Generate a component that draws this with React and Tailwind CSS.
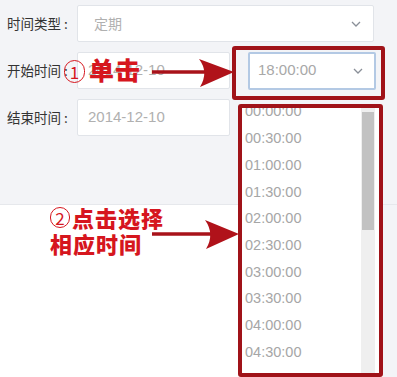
import React from 'react'

const times = ['00:00:00', '00:30:00', '01:00:00', '01:30:00', '02:00:00', '02:30:00', '03:00:00', '03:30:00', '04:00:00', '04:30:00', '05:00:00']

function Chevron() {
  return (
    <svg viewBox="0 0 10 6" className="h-[6px] w-[10px]" aria-hidden="true">
      <path d="M1 1l4 4 4-4" fill="none" stroke="#8a8f98" strokeWidth="1.3" />
    </svg>
  )
}

function Circled({ n, className }) {
  return (
    <span className={`absolute flex items-center justify-center rounded-full border border-[#d6161e] text-[17px] leading-none text-[#d6161e] ${className}`}>
      {n}
    </span>
  )
}

function Label({ children }) {
  return (
    <span className="flex w-[70px] shrink-0 items-center text-[13.5px] text-[#333]">
      {children}
      <span className="ml-[3px]">:</span>
    </span>
  )
}

export default function App() {
  const input = 'flex h-full items-center rounded-[2px] border border-[#e1e4e9] bg-white text-[#b0b0b0]'

  return (
    <div className="relative h-[377px] w-[397px] overflow-hidden bg-white font-['Noto_Sans_CJK_SC','Liberation_Sans',sans-serif]">
      <div className="flex h-[205px] flex-col gap-[10px] border-b border-[#e6e8ec] bg-[#f3f4f7] pl-[7px] pt-[5px]">
        <div className="flex h-[37px] items-center">
          <Label>时间类型</Label>
          <div className={`${input} w-[297px] justify-between pl-[16px] pr-[12px] text-[14px]`}>
            <span>定期</span>
            <Chevron />
          </div>
        </div>
        <div className="flex h-[37px] items-center">
          <Label>开始时间</Label>
          <div className={`${input} w-[153px] pl-[10px] font-['Liberation_Sans',sans-serif] text-[15px]`}>2014-12-10</div>
          <div className="ml-[18px] flex h-[38px] w-[128px] items-center justify-between rounded-[2px] border-2 border-[#b3c9e4] bg-white pl-[8px] pr-[11px] font-['Liberation_Sans',sans-serif] text-[15px] text-[#a8a8a8]">
            <span>18:00:00</span>
            <Chevron />
          </div>
        </div>
        <div className="flex h-[37px] items-center">
          <Label>结束时间</Label>
          <div className={`${input} w-[153px] pl-[10px] font-['Liberation_Sans',sans-serif] text-[15px]`}>2014-12-10</div>
        </div>
      </div>
      <div className="flex h-[172px]">
        <div className="flex-1 bg-white" />
        <div className="w-[14px] bg-[#f3f4f7]" />
      </div>

      {/* open time list */}
      <div className="absolute left-[238px] top-[104px] flex h-[273px] w-[145px] rounded-[3px] border-4 border-[#a01319] bg-white">
        <div className="flex-1 overflow-hidden">
          <div className="-mt-[9px] pl-[3px]">
            {times.map((t) => (
              <div key={t} className="flex h-[26.7px] items-center font-['Liberation_Sans',sans-serif] text-[14.5px] text-[#a6a6a6]">{t}</div>
            ))}
          </div>
        </div>
        <div className="mr-[4px] w-[14px] bg-[#efefef] pt-[4px]">
          <div className="mx-auto h-[118px] w-[12px] bg-[#c2c2c2]" />
        </div>
      </div>

      {/* annotations */}
      <div className="absolute left-[232px] top-[46px] h-[54px] w-[153px] rounded-[3px] border-4 border-[#a01319]" />
      <svg className="pointer-events-none absolute left-0 top-0 h-[377px] w-[397px]" viewBox="0 0 397 377" aria-hidden="true">
        <path d="M152 72H208" stroke="#a8121a" strokeWidth="3.5" />
        <path d="M199 59L234 72L200 87Q209 72 199 59Z" fill="#b0121a" />
        <path d="M152 234H214" stroke="#a8121a" strokeWidth="3.5" />
        <path d="M205 220L239 234L206 249Q215 234 205 220Z" fill="#b0121a" />
      </svg>
      <Circled n="1" className="left-[64px] top-[60px] h-[23px] w-[21px]" />
      <span className="absolute left-[89px] top-[57px] text-[25px] font-black leading-none tracking-[1px] text-[#d6161e]">单击</span>
      <Circled n="2" className="left-[50px] top-[207px] h-[21px] w-[20px]" />
      <span className="absolute left-[72px] top-[206px] text-[22px] font-black leading-none tracking-[1px] text-[#d6161e]">点击选择</span>
      <span className="absolute left-[50px] top-[232px] text-[22px] font-black leading-none tracking-[1px] text-[#d6161e]">相应时间</span>
    </div>
  )
}
